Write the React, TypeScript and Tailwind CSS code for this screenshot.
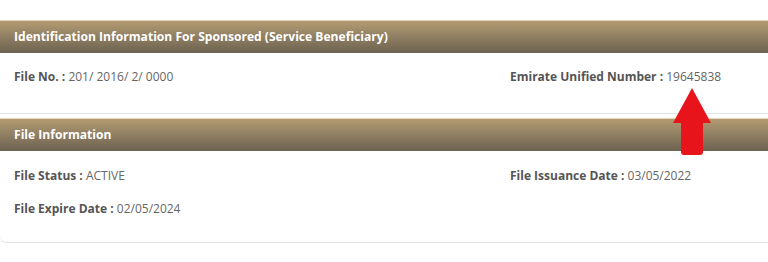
import React from "react";

const font = { fontFamily: '"Open Sans", "Noto Sans", sans-serif' };

function Header({ title }: { title: string }) {
  return (
    <div className="h-[33px] flex items-center px-[14px] bg-gradient-to-b from-[#b39b72] to-[#6d6351] border-t border-[#e2d3bb]">
      <span className="text-[12.1px] font-bold text-white">{title}</span>
    </div>
  );
}

function Field({ label, value }: { label: string; value: string }) {
  return (
    <div className="text-[12px] leading-[16px]">
      <span className="font-bold text-[#555555]">{label} : </span>
      <span className="text-[#666666]">{value}</span>
    </div>
  );
}

export default function App() {
  return (
    <div className="relative w-[768px] h-[262px] bg-white overflow-hidden" style={font}>
      <div className="pt-[20px]">
        <Header title="Identification Information For Sponsored (Service Beneficiary)" />
        <div className="h-[61px] grid grid-cols-[496px_1fr] px-[14px] pt-[16px] border-b border-[#dfe6ea]">
          <Field label="File No." value="201/ 2016/ 2/ 0000" />
          <Field label="Emirate Unified Number" value="19645838" />
        </div>
        <div className="h-[4px]" />
        <Header title="File Information" />
        <div className="h-[92px] grid grid-cols-[496px_1fr] gap-y-[17px] content-start px-[14px] pt-[17px] border-b border-[#e2e2e2] rounded-bl-[6px]">
          <Field label="File Status" value="ACTIVE" />
          <Field label="File Issuance Date" value="03/05/2022" />
          <Field label="File Expire Date" value="02/05/2024" />
        </div>
      </div>
      <svg className="absolute left-[672px] top-[87px]" width="40" height="69" viewBox="0 0 40 69">
        <path
          d="M20 1 L39 36 L31 36 L31 65 Q31 68 28 68 L12 68 Q9 68 9 65 L9 36 L1 36 Z"
          fill="#e8141c"
        />
      </svg>
    </div>
  );
}
